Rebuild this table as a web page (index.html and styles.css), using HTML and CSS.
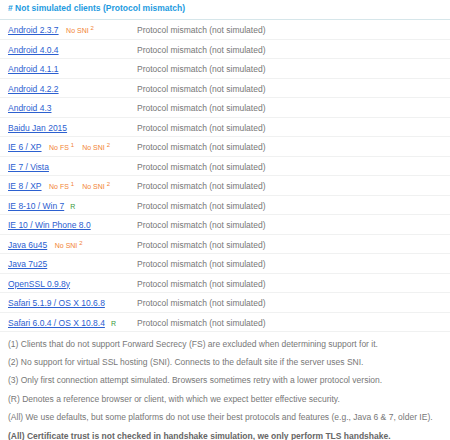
FILE: index.html
```html
<!DOCTYPE html>
<html lang="en">
<head>
  <meta charset="UTF-8">
  <title>Handshake Simulation</title>
  <link rel="stylesheet" href="styles.css">
</head>
<body>
  <table class="sim">
    <thead>
      <tr><th colspan="2"># Not simulated clients (Protocol mismatch)</th></tr>
    </thead>
    <tbody>
      <tr><td class="client"><a href="#">Android 2.3.7</a><span class="tag">No SNI <sup>2</sup></span></td><td class="res">Protocol mismatch (not simulated)</td></tr>
      <tr><td class="client"><a href="#">Android 4.0.4</a></td><td class="res">Protocol mismatch (not simulated)</td></tr>
      <tr><td class="client"><a href="#">Android 4.1.1</a></td><td class="res">Protocol mismatch (not simulated)</td></tr>
      <tr><td class="client"><a href="#">Android 4.2.2</a></td><td class="res">Protocol mismatch (not simulated)</td></tr>
      <tr><td class="client"><a href="#">Android 4.3</a></td><td class="res">Protocol mismatch (not simulated)</td></tr>
      <tr><td class="client"><a href="#">Baidu Jan 2015</a></td><td class="res">Protocol mismatch (not simulated)</td></tr>
      <tr><td class="client"><a href="#">IE 6 / XP</a><span class="tag">No FS <sup>1</sup></span><span class="tag">No SNI <sup>2</sup></span></td><td class="res">Protocol mismatch (not simulated)</td></tr>
      <tr><td class="client"><a href="#">IE 7 / Vista</a></td><td class="res">Protocol mismatch (not simulated)</td></tr>
      <tr><td class="client"><a href="#">IE 8 / XP</a><span class="tag">No FS <sup>1</sup></span><span class="tag">No SNI <sup>2</sup></span></td><td class="res">Protocol mismatch (not simulated)</td></tr>
      <tr><td class="client"><a href="#">IE 8-10 / Win 7</a><span class="ref">R</span></td><td class="res">Protocol mismatch (not simulated)</td></tr>
      <tr><td class="client"><a href="#">IE 10 / Win Phone 8.0</a></td><td class="res">Protocol mismatch (not simulated)</td></tr>
      <tr><td class="client"><a href="#">Java 6u45</a><span class="tag">No SNI <sup>2</sup></span></td><td class="res">Protocol mismatch (not simulated)</td></tr>
      <tr><td class="client"><a href="#">Java 7u25</a></td><td class="res">Protocol mismatch (not simulated)</td></tr>
      <tr><td class="client"><a href="#">OpenSSL 0.9.8y</a></td><td class="res">Protocol mismatch (not simulated)</td></tr>
      <tr><td class="client"><a href="#">Safari 5.1.9 / OS X 10.6.8</a></td><td class="res">Protocol mismatch (not simulated)</td></tr>
      <tr><td class="client"><a href="#">Safari 6.0.4 / OS X 10.8.4</a><span class="ref">R</span></td><td class="res">Protocol mismatch (not simulated)</td></tr>
    </tbody>
  </table>

  <div class="notes">
    <p>(1) Clients that do not support Forward Secrecy (FS) are excluded when determining support for it.</p>
    <p>(2) No support for virtual SSL hosting (SNI). Connects to the default site if the server uses SNI.</p>
    <p>(3) Only first connection attempt simulated. Browsers sometimes retry with a lower protocol version.</p>
    <p>(R) Denotes a reference browser or client, with which we expect better effective security.</p>
    <p>(All) We use defaults, but some platforms do not use their best protocols and features (e.g., Java 6 &amp; 7, older IE).</p>
    <p class="strong">(All) Certificate trust is not checked in handshake simulation, we only perform TLS handshake.</p>
  </div>
</body>
</html>
```

FILE: styles.css
```css
body {
  margin: 0;
  font-family: 'Liberation Sans', Arial, sans-serif;
  font-size: 8.5px;
  color: #777;
  background-color: #fff;
}
.sim {
  width: 100%;
  border-collapse: collapse;
}
.sim th {
  text-align: left;
  font-weight: bold;
  color: #1e9be0;
  line-height: 11.5px;
  padding: 2.5px 0 5px 8px;
  border-bottom: 1px solid #d6e6ea;
}
.sim td {
  line-height: 11.5px;
  padding: 5px 0 2px 8px;
  border-bottom: 1px solid #f0f1f1;
  white-space: nowrap;
}
.sim td.client {
  width: 121px;
}
.sim td.res {
  padding-left: 8px;
}
.sim a {
  color: #2c60d0;
  text-decoration: underline;
}
.tag {
  color: #f28434;
  font-size: 7px;
  margin-left: 7.5px;
}
.tag + .tag {
  margin-left: 8px;
}
.tag sup {
  font-size: 6px;
  line-height: 0;
  vertical-align: 3px;
}
.ref {
  color: #3a9a3a;
  font-size: 7px;
  margin-left: 6px;
}
.notes {
  margin-top: 2.5px;
}
.notes p {
  margin: 0;
  padding-left: 8px;
  line-height: 18.4px;
  white-space: nowrap;
}
.notes p.strong {
  font-weight: bold;
  color: #666;
}
```
